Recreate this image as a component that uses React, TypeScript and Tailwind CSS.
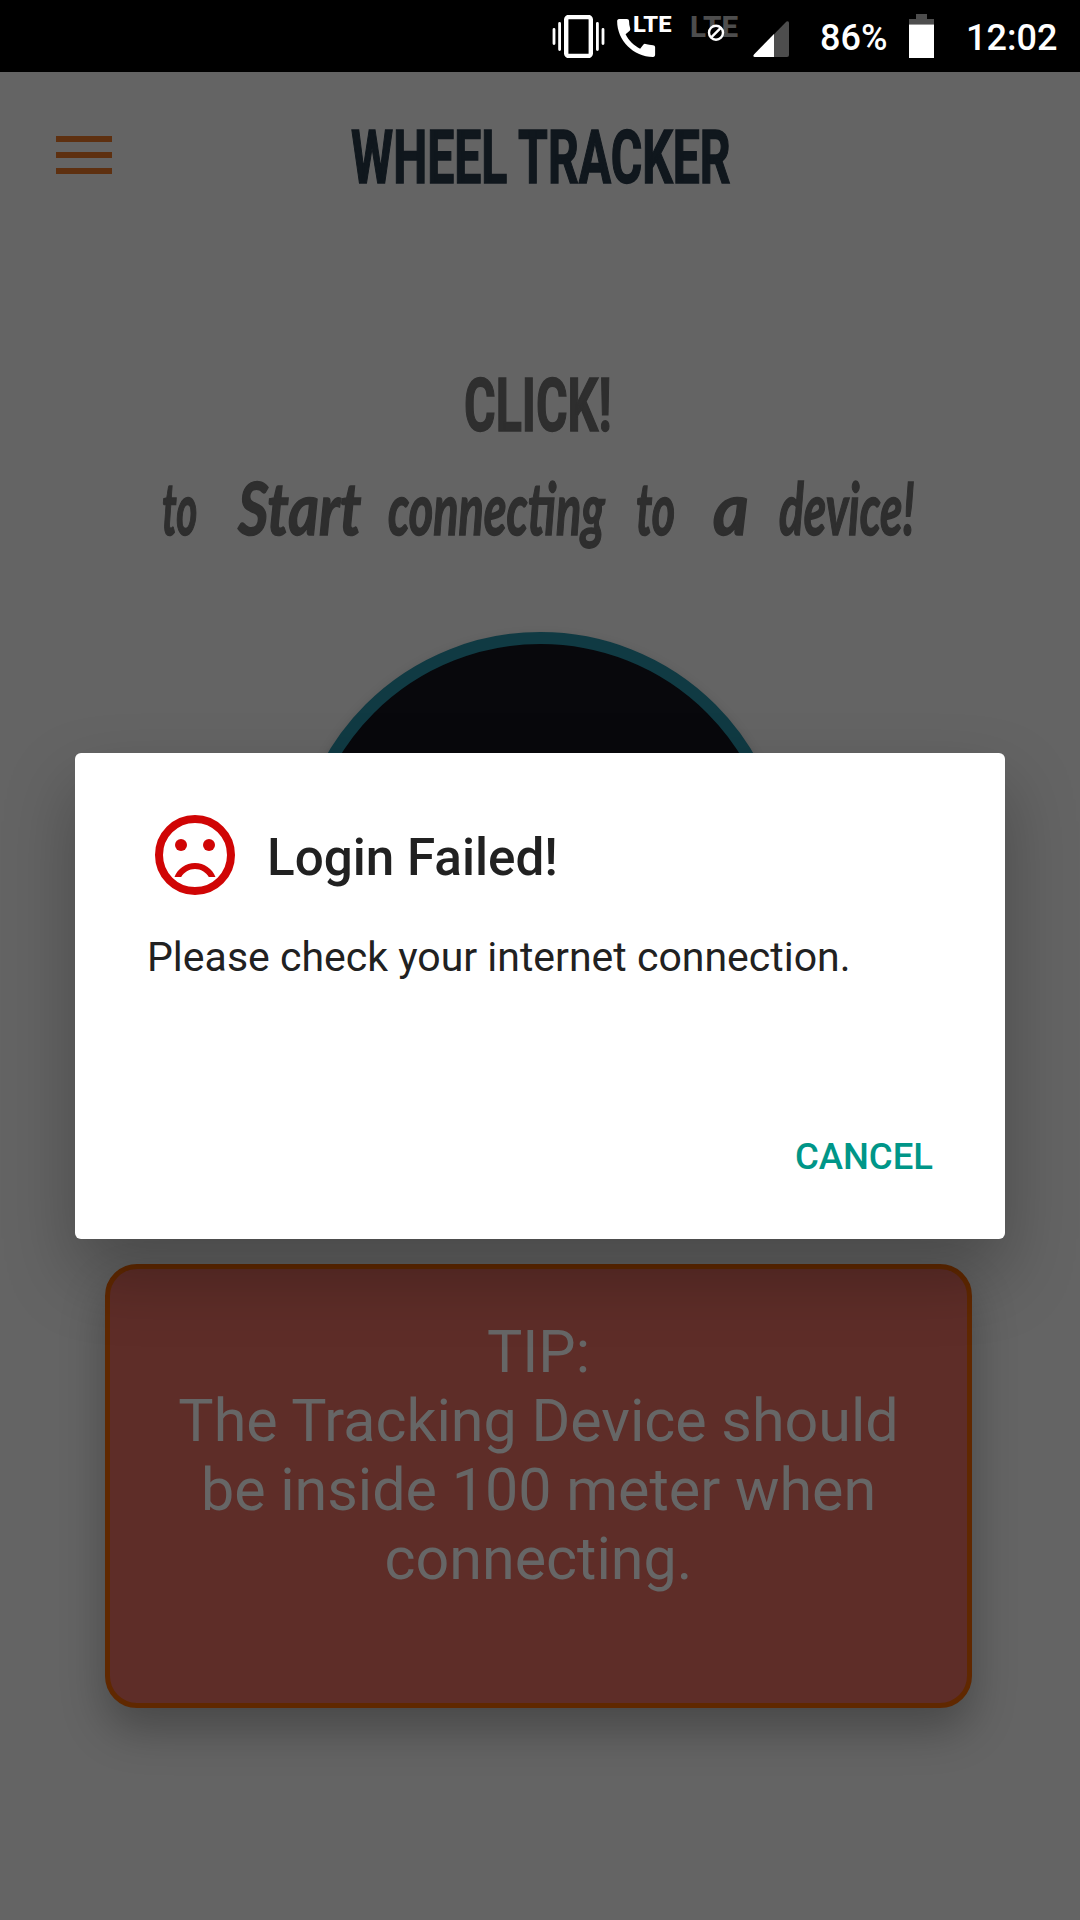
const callPath =
  "M20.01 15.38c-1.23 0-2.42-.2-3.53-.56a.977.977 0 0 0-1.01.24l-1.57 1.97c-2.83-1.35-5.48-3.9-6.89-6.83l1.95-1.66c.27-.28.35-.67.24-1.02-.37-1.11-.56-2.3-.56-3.53 0-.54-.45-.99-.99-.99H4.19C3.65 3 3 3.24 3 3.99 3 13.28 10.73 21 20.01 21c.71 0 .99-.63.99-1.18v-3.45c0-.54-.45-.99-.99-.99z";

function StatusBar() {
  return (
    <header className="flex h-[72px] w-full items-start bg-black pl-[552px] font-medium text-white">
      <svg className="mt-[15px] h-[43px] w-[53px] shrink-0" viewBox="0 0 53 43">
        <rect x="14.2" y="2" width="24.6" height="39" rx="2.5" fill="none" stroke="#fff" strokeWidth="4.4" />
        <path d="M2 14.5v14M7.6 8.5v26M45.4 8.5v26M51 14.5v14" stroke="#fff" strokeWidth="2.8" strokeLinecap="round" />
      </svg>
      <svg className="mt-[10px] ml-[12px] h-[48px] w-[56px] shrink-0 overflow-visible" viewBox="0 0 56 48">
        <path d={callPath} fill="#fff" transform="translate(-6.2 2.7) scale(2.11)" />
        <text x="16" y="22" fontSize="22.5" fontWeight="800" textLength="38.5" lengthAdjust="spacingAndGlyphs" fill="#fff">LTE</text>
      </svg>
      <svg className="mt-[8px] ml-[17px] h-[50px] w-[56px] shrink-0 overflow-visible" viewBox="0 0 56 50">
        <text x="0" y="29" fontSize="29" fontWeight="800" textLength="48" lengthAdjust="spacingAndGlyphs" fill="#4d4d4d">LTE</text>
        <circle cx="26" cy="24.7" r="7" fill="#000" stroke="#fff" strokeWidth="2.4" />
        <path d="M21 29.700l10-10" stroke="#fff" strokeWidth="2.4" />
      </svg>
      <svg className="mt-[20px] ml-[7px] h-[37px] w-[36px] shrink-0" viewBox="0 0 36 37">
        <path d="M1 34.500L33.500 1.500Q36 .5 36 3V35Q36 37 34 37H2Q-.5 37 1 34.500Z" fill="#4d4d4d" />
        <path d="M1 34.500L21 14V37H2Q-.5 37 1 34.500Z" fill="#fff" />
      </svg>
      <span className="mt-[17px] ml-[31px] w-[68px] text-[36px] leading-[42px]">86%</span>
      <svg className="mt-[14px] ml-[21px] h-[44px] w-[25px] shrink-0" viewBox="0 0 25 44">
        <path d="M7 0h11v5h7v6H0V5h7z" fill="#4d4d4d" />
        <path d="M0 10h25v1H0z" fill="#999" />
        <path d="M0 11h25v33H0z" fill="#fff" />
      </svg>
      <span className="mt-[17px] ml-[32px] text-[36px] leading-[42px]">12:02</span>
    </header>
  );
}

function TopBar() {
  return (
    <div className="flex h-[168px] items-start pl-[56px]">
      <div className="mt-[64px] flex w-[56px] flex-col gap-[10px]">
        <div className="h-[6px] bg-[#5e3010]" />
        <div className="h-[6px] bg-[#5e3010]" />
        <div className="h-[6px] bg-[#5e3010]" />
      </div>
      <h1 className="mt-[40px] ml-[239px] w-[380px] text-[75px] leading-[90px] font-bold whitespace-nowrap text-[#10171d]">
        <span className="inline-block origin-left scale-x-[0.642] [-webkit-text-stroke:1.5px_#10171d]">WHEEL TRACKER</span>
      </h1>
    </div>
  );
}

function ScriptLine() {
  return (
    <p className="flex h-[90px] pl-[162px] font-['Lato'] text-[72px] leading-[90px] font-bold whitespace-nowrap text-[#2e2e2e] italic [-webkit-text-stroke:1.5px_#2e2e2e]">
      <span className="w-[76px]"><span className="inline-block origin-left scale-x-[0.56]">to</span></span>
      <span className="w-[150px]"><span className="inline-block origin-left scale-x-[0.82]">Start</span></span>
      <span className="w-[248px]"><span className="inline-block origin-left scale-x-[0.65]">connecting</span></span>
      <span className="w-[77px]"><span className="inline-block origin-left scale-x-[0.62]">to</span></span>
      <span className="w-[66px]"><span className="inline-block origin-left scale-x-[0.95]">a</span></span>
      <span className="w-[140px]"><span className="inline-block origin-left scale-x-[0.64]">device!</span></span>
    </p>
  );
}

function TipCard() {
  return (
    <section className="mt-[137px] ml-[105px] h-[444px] w-[867px] rounded-[32px] border-5 border-[#602800] bg-[#5e2d28] pt-[48px] text-center text-[59.2px] leading-[69px] text-[#666] shadow-[0_22px_44px_rgba(0,0,0,0.28)]">
      <p>TIP:</p>
      <p>The Tracking Device should</p>
      <p>be inside 100 meter when</p>
      <p>connecting.</p>
    </section>
  );
}

function Dialog() {
  return (
    <div role="dialog" className="absolute top-[753px] left-[75px] flex h-[486px] w-[930px] flex-col rounded-[6px] bg-white text-[#212121] shadow-[0_34px_70px_rgba(0,0,0,0.27)]">
      <div className="flex pt-[54px] pl-[72px]">
        <svg className="size-[96px]" viewBox="0 0 24 24" fill="#d00505">
          <circle cx="12" cy="12" r="9" fill="none" stroke="#d00505" strokeWidth="2" />
          <circle cx="8.500" cy="9.500" r="1.500" />
          <circle cx="15.500" cy="9.500" r="1.500" />
          <path d="M12 14c-2.33 0-4.320 1.450-5.120 3.500h1.670c.69-1.190 1.970-2 3.450-2s2.750.81 3.450 2h1.670c-.8-2.050-2.790-3.500-5.120-3.500z" />
        </svg>
        <h2 className="mt-[21px] ml-[24px] text-[51.2px] leading-[60px] font-medium">Login Failed!</h2>
      </div>
      <p className="mt-[30px] pl-[72px] text-[41px] leading-[48px]">Please check your internet connection.</p>
      <div className="mt-[154px] flex justify-end pr-[72px]">
        <button className="text-[36.500px] leading-[44px] font-medium text-[#009688]">CANCEL</button>
      </div>
    </div>
  );
}

export default function App() {
  return (
    <div className="relative flex h-[1920px] w-[1080px] flex-col overflow-hidden bg-[#646464] font-['Roboto',sans-serif]">
      <StatusBar />
      <TopBar />
      <h2 className="mt-[120px] ml-[464px] h-[90px] w-[148px] text-[75px] leading-[90px] font-bold whitespace-nowrap text-[#2e2e2e]">
        <span className="inline-block origin-left scale-x-[0.645] [-webkit-text-stroke:1.5px_#2e2e2e]">CLICK!</span>
      </h2>
      <div className="mt-[12px]">
        <ScriptLine />
      </div>
      <div className="mt-[80px] size-[495px] shrink-0 self-center rounded-full border-12 border-[#103a43] bg-[#08080c] shadow-[0_6px_12px_rgba(0,0,0,0.25)]" />
      <TipCard />
      <Dialog />
    </div>
  );
}
